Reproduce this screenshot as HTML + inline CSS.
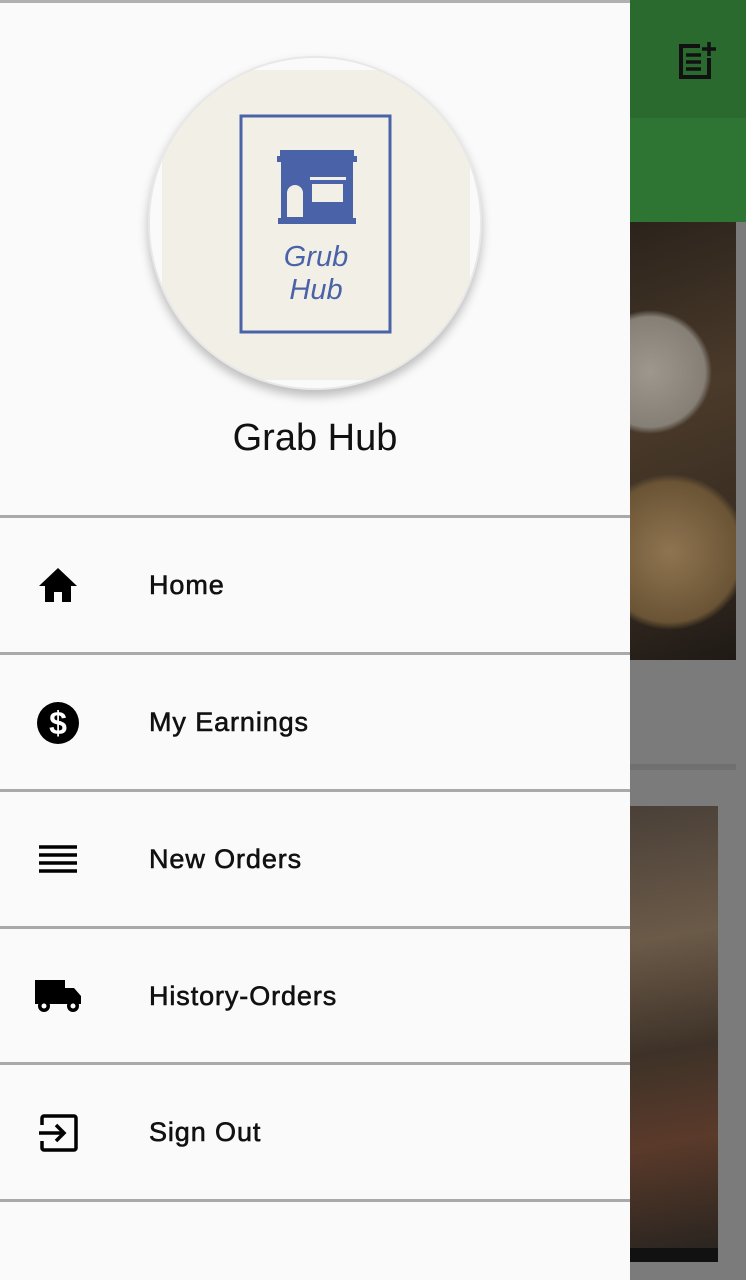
<!DOCTYPE html><html><head><style>
body{margin:0;width:746px;height:1280px;position:relative;overflow:hidden;background:#7b7b7b;font-family:"Liberation Sans",Roboto,sans-serif}
.drawer{position:absolute;left:0;top:0;width:630px;height:1280px;background:#fafafa;border-top:3px solid #b0b0b0;box-sizing:border-box}
.div{position:absolute;left:0;width:630px;height:3px;background:#a9a9a9}
.item{position:absolute;left:149px;font-size:27px;color:#111;font-weight:normal;letter-spacing:0.9px;-webkit-text-stroke:0.6px #111}
.ic{position:absolute;left:36px}
</style></head><body>
<div style="position:absolute;left:630px;top:0;width:116px;height:118px;background:#2b6a2f"></div>
<div style="position:absolute;left:630px;top:118px;width:116px;height:104px;background:#2e7433"></div>
<svg style="position:absolute;left:676px;top:40px" width="42" height="42" viewBox="0 0 42 42"><path d="M24 6H5v31h28V18" fill="none" stroke="#111" stroke-width="4"/><path d="M10 15h15M10 22h15M10 29h15M33 2v14M26 9h14" stroke="#111" stroke-width="3.5"/></svg>
<div style="position:absolute;left:630px;top:222px;width:106px;height:438px;background:radial-gradient(circle 62px at 20px 150px,#9d978d 0,#857f76 55px,transparent 62px),radial-gradient(circle 78px at 40px 330px,#8f7450 0,#6a5435 70px,transparent 78px),linear-gradient(160deg,#2b231c,#4a3a2a 40%,#3a2e22 70%,#1f1a16)"></div>
<div style="position:absolute;left:630px;top:764px;width:106px;height:6px;background:#707070"></div>
<div style="position:absolute;left:630px;top:806px;width:88px;height:456px;background:linear-gradient(170deg,#4a4038,#6b5a48 30%,#3e3228 55%,#5a3a2a 75%,#2a2520);border-bottom:14px solid #111;box-sizing:border-box"></div>
<div class="drawer">
<div style="position:absolute;left:148px;top:53px;width:334px;height:334px;border-radius:50%;background:#f2efe6;box-shadow:0 6px 10px rgba(0,0,0,.25);border:2px solid #e8e8e8;overflow:hidden;box-sizing:border-box">
<div style="position:absolute;left:0;top:0;width:12px;height:100%;background:#fafafa"></div>
<div style="position:absolute;right:0;top:0;width:10px;height:100%;background:#fafafa"></div>
<div style="position:absolute;left:0;top:0;width:100%;height:12px;background:#fafafa"></div>
<div style="position:absolute;left:0;bottom:0;width:100%;height:8px;background:#fafafa"></div>
</div>
<svg style="position:absolute;left:238px;top:110px" width="156" height="224" viewBox="0 0 156 224"><rect x="3" y="3" width="149" height="216" fill="none" stroke="#4a62a8" stroke-width="3"/>
<rect x="42" y="37" width="74" height="6" fill="#4a62a8"/><rect x="39" y="43" width="80" height="6" fill="#4a62a8"/><rect x="43" y="49" width="72" height="58" fill="#4a62a8"/><rect x="40" y="105" width="78" height="6" fill="#4a62a8"/>
<path d="M49 104V80a8 8 0 0 1 16 0v24z" fill="#f2efe6"/><rect x="72" y="64" width="36" height="3" fill="#f2efe6"/><rect x="74" y="71" width="31" height="18" fill="#f2efe6"/>
<text x="78" y="153" text-anchor="middle" font-size="29" font-style="italic" fill="#4a62a8" font-family="Liberation Sans">Grub</text>
<text x="78" y="186" text-anchor="middle" font-size="29" font-style="italic" fill="#4a62a8" font-family="Liberation Sans">Hub</text></svg>
<div style="position:absolute;left:0;width:630px;top:414px;text-align:center;font-size:38px;color:#111">Grab Hub</div>
</div>
<div class="div" style="top:515px"></div><div class="div" style="top:652px"></div><div class="div" style="top:789px"></div><div class="div" style="top:926px"></div><div class="div" style="top:1062px"></div><div class="div" style="top:1199px"></div>
<div class="item" style="top:570px">Home</div>
<div class="item" style="top:707px">My Earnings</div>
<div class="item" style="top:844px">New Orders</div>
<div class="item" style="top:981px">History-Orders</div>
<div class="item" style="top:1117px">Sign Out</div>
<svg class="ic" style="top:566px" width="44" height="40" viewBox="0 0 44 40"><path d="M22 2L3 20h6v16h9V26h8v10h9V20h6z" fill="#000"/></svg>
<svg class="ic" style="top:701px" width="44" height="44" viewBox="0 0 44 44"><circle cx="22" cy="22" r="21" fill="#000"/><text x="22" y="33" text-anchor="middle" font-size="32" font-weight="bold" fill="#fff" font-family="Liberation Sans">$</text></svg>
<svg class="ic" style="top:844px" width="44" height="32" viewBox="0 0 44 32"><path d="M3 3h38M3 11h38M3 19h38M3 27h38" stroke="#000" stroke-width="3.5"/></svg>
<svg class="ic" style="top:978px;left:34px" width="50" height="36" viewBox="0 0 50 36"><path d="M1 2h30v24H1z M31 10h9l7 8v8H31z" fill="#000"/><circle cx="10" cy="28" r="6" fill="#000"/><circle cx="10" cy="28" r="2.5" fill="#fff"/><circle cx="39" cy="28" r="6" fill="#000"/><circle cx="39" cy="28" r="2.5" fill="#fff"/></svg>
<svg class="ic" style="top:1113px" width="44" height="40" viewBox="0 0 44 40"><path d="M6 12V5a2 2 0 0 1 2-2h30a2 2 0 0 1 2 2v30a2 2 0 0 1-2 2H8a2 2 0 0 1-2-2v-7" fill="none" stroke="#000" stroke-width="3.5"/><path d="M3 20h24M20 12l8 8-8 8" fill="none" stroke="#000" stroke-width="3.5"/></svg>
</body></html>
